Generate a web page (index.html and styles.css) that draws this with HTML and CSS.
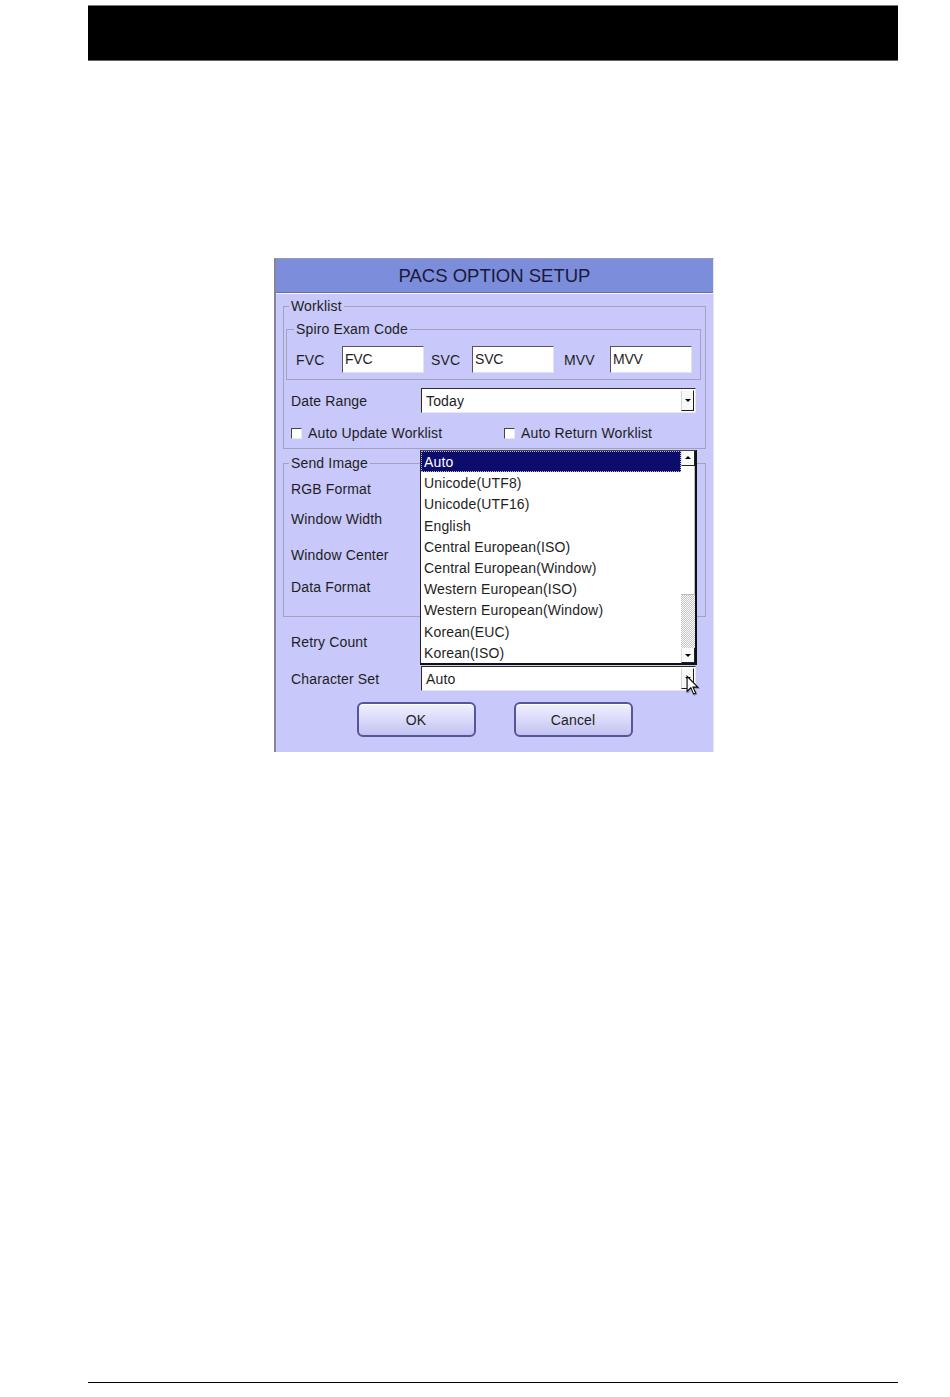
FILE: index.html
```html
<!DOCTYPE html>
<html lang="en">
<head>
    <meta charset="UTF-8">
    <meta name="viewport" content="width=device-width, initial-scale=1.0">
    <title>PACS Option Setup</title>
    <link rel="stylesheet" href="styles.css">
</head>
<body>
    <div class="top-bar"></div>

    <div class="dialog">
        <div class="dialog-title">PACS OPTION SETUP</div>

        <div class="dialog-body">
            <fieldset class="group group-worklist">
                <legend>Worklist</legend>

                <fieldset class="group group-spiro">
                    <legend>Spiro Exam Code</legend>
                    <div class="code-row">
                        <span class="code-label">FVC</span>
                        <span class="text-box">FVC</span>
                        <span class="code-label">SVC</span>
                        <span class="text-box">SVC</span>
                        <span class="code-label">MVV</span>
                        <span class="text-box">MVV</span>
                    </div>
                </fieldset>

                <div class="field-row field-row-inner">
                    <span class="field-label">Date Range</span>
                    <div class="combo">
                        <span class="combo-value">Today</span>
                        <span class="combo-btn"></span>
                    </div>
                </div>

                <div class="check-row">
                    <label class="check check-first"><span class="check-box"></span>Auto Update Worklist</label>
                    <label class="check"><span class="check-box"></span>Auto Return Worklist</label>
                </div>
            </fieldset>

            <fieldset class="group group-send">
                <legend>Send Image</legend>
                <div class="send-grid">
                    <span class="field-label">RGB Format</span>
                    <span class="field-label">Window Width</span>
                    <span class="field-label">Window Center</span>
                    <span class="field-label">Data Format</span>
                </div>
            </fieldset>

            <div class="field-row">
                <span class="field-label">Retry Count</span>
            </div>

            <div class="field-row">
                <span class="field-label">Character Set</span>
                <div class="combo">
                    <span class="combo-value">Auto</span>
                    <span class="combo-btn"></span>
                </div>
            </div>

            <div class="button-row">
                <button class="dlg-button" type="button">OK</button>
                <button class="dlg-button" type="button">Cancel</button>
            </div>
        </div>

        <!-- open drop-down of Character Set -->
        <div class="charset-list">
            <ul class="charset-items">
                <li class="selected"><span>Auto</span></li>
                <li>Unicode(UTF8)</li>
                <li>Unicode(UTF16)</li>
                <li>English</li>
                <li>Central European(ISO)</li>
                <li>Central European(Window)</li>
                <li>Western European(ISO)</li>
                <li>Western European(Window)</li>
                <li>Korean(EUC)</li>
                <li>Korean(ISO)</li>
            </ul>
            <div class="scrollbar">
                <span class="scroll-btn scroll-up"></span>
                <span class="scroll-thumb"></span>
                <span class="scroll-track"></span>
                <span class="scroll-btn scroll-down"></span>
            </div>
        </div>

        <svg class="cursor" width="14" height="21" viewBox="0 0 13 19">
            <path d="M1 1 L1 15 L4.5 11.5 L7 17.5 L9 16.5 L6.5 11 L11 11 Z" fill="#fff" stroke="#000" stroke-width="1" stroke-linejoin="miter"/>
        </svg>
    </div>

    <div class="bottom-rule"></div>
</body>
</html>
```

FILE: styles.css
```css
/* page frame */
body {
    margin: 0;
    background: #fff;
    font-family: "Liberation Sans", Arial, sans-serif;
    font-size: 14px;
    letter-spacing: 0.15px;
    color: #1e1e1e;
}

.top-bar {
    margin: 5px 0 0 88px;
    width: 810px;
    height: 56px;
    background: #000;
    border-top: 1px solid #777;
    border-bottom: 1px solid #666;
    box-sizing: border-box;
}

.bottom-rule {
    margin: 630px 0 0 88px;
    width: 810px;
    height: 1px;
    background: #000;
    box-shadow: 0 1px 0 #777;
}

/* dialog window */
.dialog {
    position: relative;
    box-sizing: border-box;
    margin: 197px 0 0 274px;
    width: 440px;
    height: 494px;
    background: #c8c8fa;
    border-left: 2px solid #85859a;
    border-top: 1px solid #9a9aae;
    border-right: 1px solid #e4e4f4;
    overflow: hidden;
}

.dialog-title {
    height: 33px;
    line-height: 34px;
    background: #7b8ddb;
    border-bottom: 1px solid #6e6e8c;
    box-shadow: 0 1px 0 #f4f4ff;
    text-align: center;
    font-size: 18.5px;
    letter-spacing: 0;
    color: #1a1a3a;
}

.dialog-body {
    padding: 5px 7px 0 7px;
}

/* group boxes */
.group {
    margin: 0;
    padding: 0;
    min-width: 0;
    border: 1px solid #a2a2bc;
}

.group legend {
    padding: 0 2px;
    margin-left: 5px;
    line-height: 16px;
}

.group-worklist {
    padding-bottom: 7px;
}

.group-spiro {
    margin: 7px 4px 0 2px;
}

.group-spiro legend {
    margin-left: 7px;
}

.group-send {
    margin-top: 6px;
}

/* spiro code inputs */
.code-row {
    display: grid;
    grid-template-columns: 46px 82px 48px 82px 56px 82px;
    align-items: center;
    margin: 9px 0 6px 9px;
}

.code-row .code-label:nth-child(3) {
    padding-left: 7px;
}

.code-row .code-label:nth-child(5) {
    padding-left: 10px;
}

.text-box {
    box-sizing: border-box;
    height: 27px;
    line-height: 25px;
    padding-left: 2px;
    background: #fff;
    border-top: 1px solid #555;
    border-left: 1px solid #555;
    border-right: 1px solid #e2e2ec;
    border-bottom: 1px solid #e2e2ec;
    letter-spacing: -0.2px;
}

/* label + combo rows */
.field-row {
    display: flex;
    align-items: center;
    height: 25px;
    margin: 12px 0 0 8px;
}

.field-row-inner {
    margin: 8px 0 0 7px;
}

.field-label {
    width: 130px;
    flex-shrink: 0;
    line-height: 16px;
}

.combo {
    box-sizing: border-box;
    display: flex;
    align-items: center;
    width: 275px;
    height: 25px;
    background: #fff;
    border-top: 1px solid #2c2c2c;
    border-left: 1px solid #2c2c2c;
    border-right: 1px solid #e6e6f0;
    border-bottom: 1px solid #e6e6f0;
}

.combo-value {
    flex: 1;
    padding-left: 4px;
}

.combo-btn {
    position: relative;
    box-sizing: border-box;
    width: 13px;
    height: 21px;
    margin-right: 1px;
    background: #f8f8f8;
    border-left: 1px solid #d6d6d6;
    border-top: 1px solid #fff;
    border-right: 1px solid #1c1c1c;
    border-bottom: 1px solid #1c1c1c;
}

.combo-btn::after {
    content: "";
    position: absolute;
    left: 3px;
    top: 8px;
    border-top: 3px solid #000;
    border-left: 3px solid transparent;
    border-right: 3px solid transparent;
}

/* checkboxes */
.check-row {
    display: flex;
    align-items: center;
    height: 16px;
    margin: 12px 0 0 7px;
}

.check {
    display: flex;
    align-items: center;
}

.check-first {
    width: 213px;
}

.check-box {
    box-sizing: border-box;
    width: 11px;
    height: 11px;
    margin-right: 6px;
    background: #fff;
    border-top: 1px solid #444;
    border-left: 1px solid #444;
    border-right: 1px solid #e8e8f0;
    border-bottom: 1px solid #e8e8f0;
}

/* send image rows */
.send-grid {
    display: grid;
    grid-template-rows: 35px 25px 48px 16px;
    align-items: center;
    padding: 0 0 21px 7px;
}

/* buttons */
.button-row {
    display: flex;
    justify-content: center;
    gap: 38px;
    margin-top: 11px;
}

.dlg-button {
    width: 119px;
    height: 35px;
    border: 2px solid #55559a;
    border-radius: 6px;
    background: linear-gradient(#f0f0ff, #d8d8fa 55%, #c2c2f0);
    box-shadow: inset 0 1px 0 #fff;
    font-family: "Liberation Sans", Arial, sans-serif;
    font-size: 14px;
    letter-spacing: 0.15px;
    color: #1e1e1e;
    padding: 0;
}

/* drop-down list */
.charset-list {
    position: absolute;
    left: 144px;
    top: 191px;
    display: flex;
    width: 277px;
    box-sizing: border-box;
    background: #fff;
    border-left: 1px solid #222;
    border-top: 1px solid #444;
    border-right: 2px solid #111;
    border-bottom: 2px solid #111;
}

.charset-items {
    flex: 1;
    list-style: none;
    margin: 0;
    padding: 0;
}

.charset-items li {
    height: 21.2px;
    line-height: 23px;
    padding-left: 3px;
    white-space: nowrap;
}

.charset-items li.selected {
    background: #0c0c6c;
    color: #fff;
    padding-left: 0;
    outline: 1px dotted #b8b8d8;
    outline-offset: -1px;
}

.charset-items li.selected span {
    padding-left: 3px;
}

.scrollbar {
    display: flex;
    flex-direction: column;
    width: 14px;
}

.scroll-btn {
    position: relative;
    box-sizing: border-box;
    height: 15px;
    background: #fafafa;
    border-left: 1px solid #e0e0e0;
    border-right: 1px solid #222;
    border-bottom: 1px solid #222;
}

.scroll-up::after,
.scroll-down::after {
    content: "";
    position: absolute;
    left: 3px;
    top: 5px;
    border-left: 3px solid transparent;
    border-right: 3px solid transparent;
}

.scroll-up::after {
    border-bottom: 3px solid #000;
}

.scroll-down::after {
    top: 6px;
    border-top: 3px solid #000;
}

.scroll-thumb {
    box-sizing: border-box;
    height: 129px;
    background: #fff;
    border-right: 1px solid #bbb;
    border-bottom: 1px solid #bbb;
}

.scroll-track {
    flex: 1;
    background: repeating-conic-gradient(#c4c4c4 0 25%, #fff 0 50%) 0 0 / 2px 2px;
}

/* mouse pointer over the combo button */
.cursor {
    position: absolute;
    left: 410px;
    top: 416px;
    filter: drop-shadow(1px 1px 0 rgba(60, 60, 60, 0.45));
}
```
